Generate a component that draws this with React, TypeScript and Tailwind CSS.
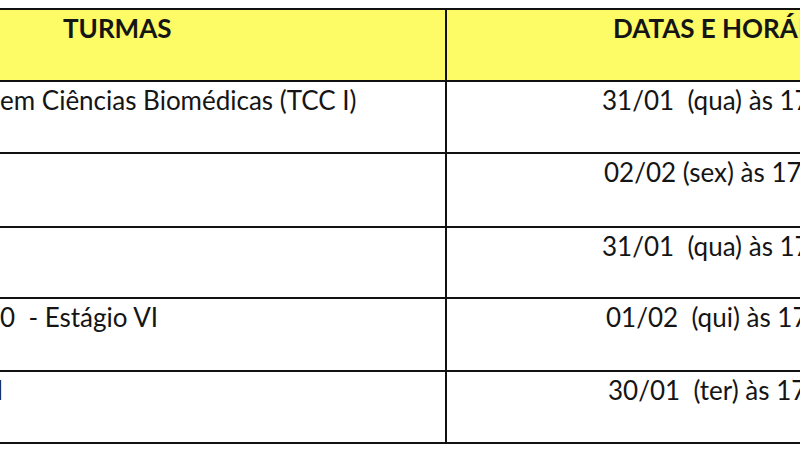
const rows = [
  { turma: "em Ciências Biomédicas (TCC I)", data: "31/01  (qua) às 17h00", h: "h-[72px]", pad: "pl-[155px]", tpad: "" },
  { turma: "", data: "02/02 (sex) às 17h00", h: "h-[74px]", pad: "pl-[157px]", tpad: "" },
  { turma: "", data: "31/01  (qua) às 17h00", h: "h-[71px]", pad: "pl-[155px]", tpad: "" },
  { turma: "0  - Estágio VI", data: "01/02  (qui) às 17h00", h: "h-[73px]", pad: "pl-[159px]", tpad: "" },
  { turma: "I", data: "30/01  (ter) às 17h00", h: "h-[72px]", pad: "pl-[161px]", tpad: "-ml-[4px]" },
];

export default function App() {
  return (
    <div className="w-[800px] h-[450px] overflow-hidden bg-white pt-[8px] font-['Lato',sans-serif] text-[26px] leading-[30px] text-[#151515]">
      <div className="border-t-2 border-[#111]">
        <div className="flex h-[72px] border-b-2 border-[#111] bg-[#fdfb66]">
          <div className="w-[447px] shrink-0 border-r-2 border-[#111] pl-[63px] pt-[3px] font-bold">
            TURMAS
          </div>
          <div className="flex-1 whitespace-nowrap pl-[166px] pt-[3px] font-bold">
            DATAS E HORÁRIOS
          </div>
        </div>
        {rows.map((r, i) => (
          <div key={i} className={`flex ${r.h} border-b-2 border-[#111]`}>
            <div className="w-[447px] shrink-0 overflow-hidden whitespace-pre border-r-2 border-[#111] pt-[3px]">
              <span className={`block ${r.tpad}`}>{r.turma}</span>
            </div>
            <div className={`flex-1 whitespace-pre pt-[3px] ${r.pad}`}>{r.data}</div>
          </div>
        ))}
      </div>
    </div>
  );
}
